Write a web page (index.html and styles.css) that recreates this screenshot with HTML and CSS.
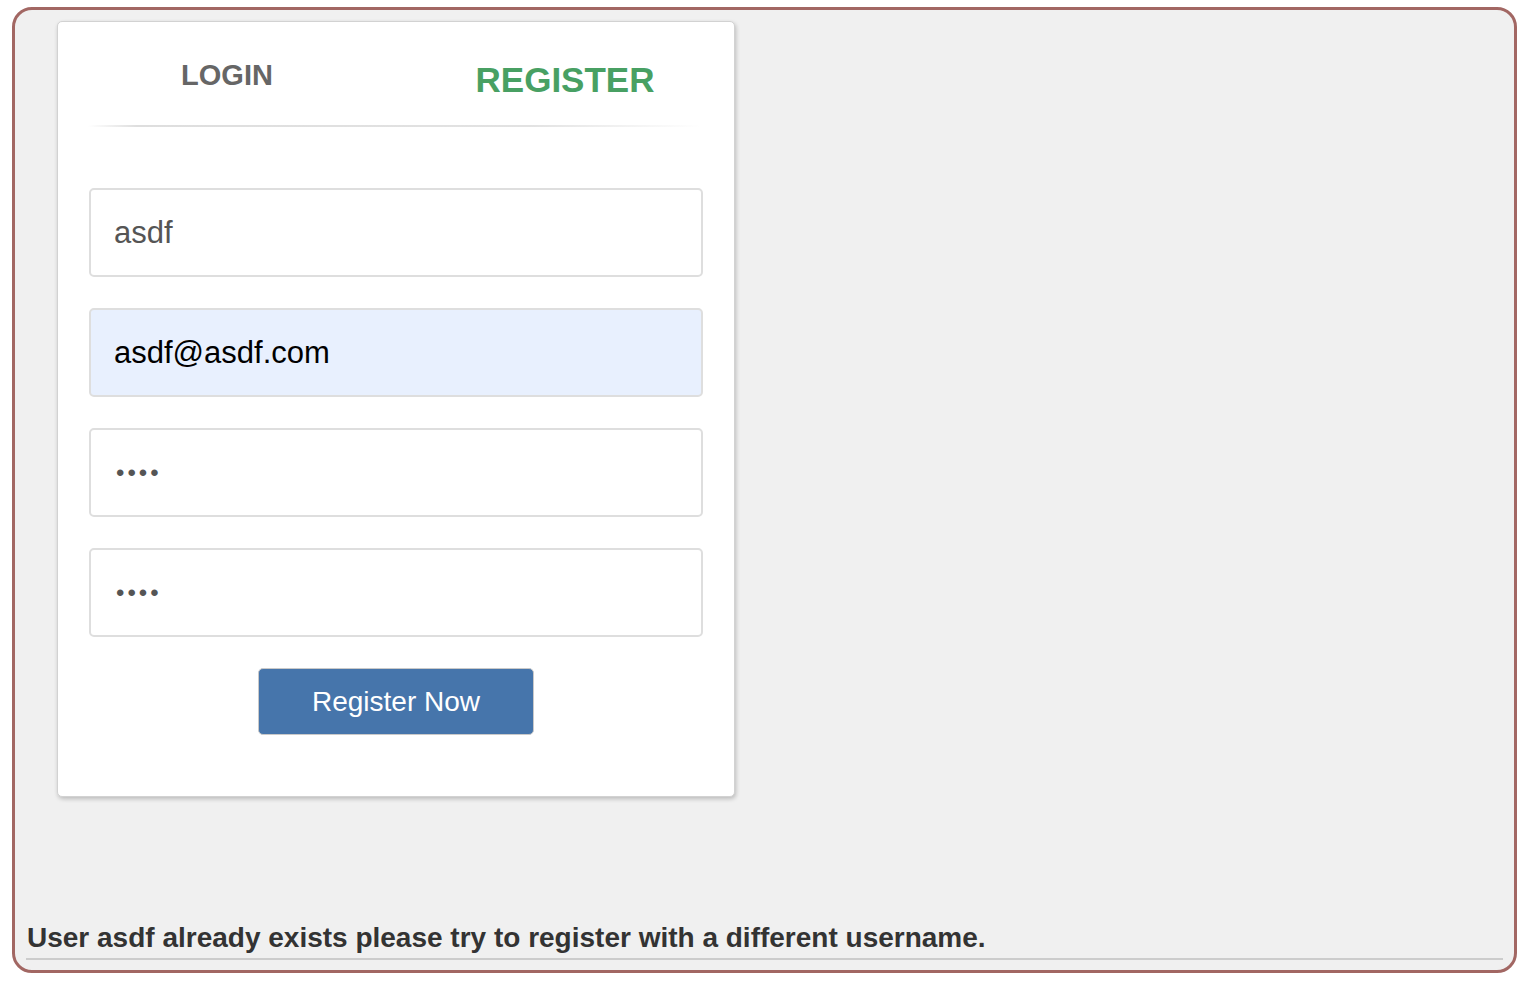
FILE: index.html
```html
<!DOCTYPE html>
<html lang="en">
<head>
<meta charset="utf-8">
<title>Register</title>
<link rel="stylesheet" href="styles.css">
</head>
<body>
<div class="frame">
  <div class="card">
    <div class="tabs">
      <div class="tab tab-login">LOGIN</div>
      <div class="tab tab-register">REGISTER</div>
    </div>
    <div class="divider"></div>
    <form class="form">
      <input class="field" type="text" value="asdf">
      <input class="field field-autofill" type="text" value="asdf@asdf.com">
      <input class="field field-pass" type="password" value="asdf">
      <input class="field field-pass" type="password" value="asdf">
      <button class="btn" type="button">Register Now</button>
    </form>
  </div>
  <div class="message">User asdf already exists please try to register with a different username.</div>
</div>
</body>
</html>
```
FILE: styles.css
```css
html, body {
  margin: 0;
  padding: 0;
  background: #ffffff;
  font-family: "Liberation Sans", Arial, Helvetica, sans-serif;
}

.frame {
  box-sizing: border-box;
  margin: 7px 5px 0 12px;
  height: 966px;
  border: 3px solid #a26763;
  border-radius: 20px;
  background: #f0f0f0;
  display: flex;
  flex-direction: column;
}

.card {
  box-sizing: border-box;
  width: 678px;
  margin: 11px 0 0 42px;
  background: #ffffff;
  border: 1px solid #d2d2d2;
  border-radius: 5px;
  box-shadow: 1px 2px 4px rgba(0, 0, 0, 0.22);
  padding-bottom: 61px;
}

.tabs {
  display: flex;
  align-items: flex-start;
  padding-top: 39px;
}

.tab {
  flex: 1;
  text-align: center;
  font-weight: bold;
  line-height: 1;
}

.tab-login {
  font-size: 29px;
  color: #666666;
}

.tab-register {
  font-size: 35px;
  color: #48a063;
  margin-top: 1px;
}

.divider {
  height: 2px;
  margin: 28px 33px 0 30px;
  background: linear-gradient(to right, rgba(222, 222, 222, 0) 0%, #dedede 8%, #e2e2e2 72%, rgba(222, 222, 222, 0) 100%);
}

.form {
  display: flex;
  flex-direction: column;
  align-items: center;
  gap: 31px;
  padding: 61px 31px 0;
  margin: 0;
}

.field {
  box-sizing: border-box;
  width: 100%;
  height: 89px;
  margin: 0;
  padding: 0 20px 0 23px;
  border: 2px solid #dedede;
  border-radius: 5px;
  background: #ffffff;
  font-family: "Liberation Sans", Arial, Helvetica, sans-serif;
  font-size: 31px;
  color: #555555;
  outline: none;
}

.field-autofill {
  background: #e8f0fe;
  color: #000000;
}

.field-pass {
  padding-left: 25px;
  font-size: 24px;
  letter-spacing: 3px;
}

.btn {
  box-sizing: border-box;
  width: 276px;
  height: 67px;
  margin: 0;
  border: 1px solid #c9c9c9;
  border-radius: 5px;
  background: #4675ab;
  color: #ffffff;
  font-family: "Liberation Sans", Arial, Helvetica, sans-serif;
  font-size: 28px;
  cursor: pointer;
}

.message {
  margin: auto 11px 10px;
  padding: 0 0 4px 1px;
  border-bottom: 2px solid #cccccc;
  font-size: 28px;
  line-height: 32px;
  font-weight: bold;
  color: #333333;
}
```
